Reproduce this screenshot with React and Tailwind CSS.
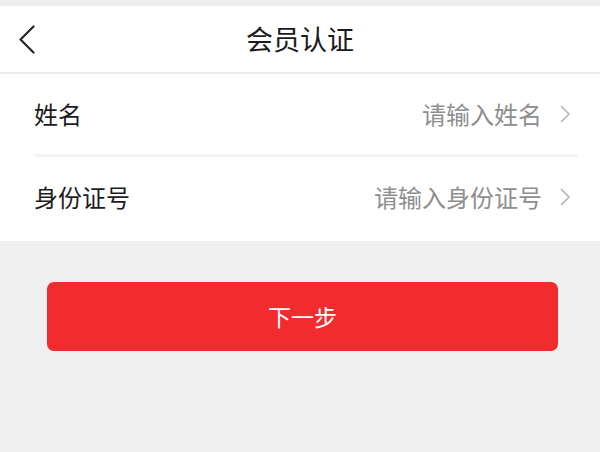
import React from "react";

const font = { fontFamily: '"Noto Sans CJK SC", "Noto Sans", sans-serif' };

const ChevronRight = () => (
  <svg width="11" height="18" viewBox="0 0 11 18" fill="none">
    <path d="M1.5 1.5L9 9L1.5 16.5" stroke="#b3b3b3" strokeWidth="1.6" strokeLinecap="round" strokeLinejoin="round" />
  </svg>
);

const Row = ({ label, placeholder, className = "" }) => (
  <div className={"flex items-center pl-[34px] pr-[29px] " + className}>
    <span className="text-[24px] text-[#1c1c1c] leading-none">{label}</span>
    <span className="ml-auto text-[24px] text-[#8e8e8e] leading-none">{placeholder}</span>
    <span className="ml-[18px] flex items-center">
      <ChevronRight />
    </span>
  </div>
);

export default function App() {
  return (
    <div className="w-[600px] h-[452px] bg-[#f0f0f0] flex flex-col overflow-hidden" style={font}>
      <div className="h-[6px] bg-[#eeeeee]" />

      {/* header */}
      <div className="h-[68px] bg-white border-b-2 border-[#ebebeb] grid grid-cols-[1fr_auto_1fr] items-center">
        <div className="pl-[18px] flex items-center">
          <svg width="18" height="29" viewBox="0 0 18 29" fill="none">
            <path d="M15.5 1.5L2.5 14.5L15.5 27.5" stroke="#262626" strokeWidth="2.2" strokeLinecap="round" strokeLinejoin="round" />
          </svg>
        </div>
        <div className="text-[27px] text-[#1a1a1a] leading-none pb-[2px]">会员认证</div>
        <div />
      </div>

      {/* form */}
      <div className="bg-white flex flex-col">
        <Row label="姓名" placeholder="请输入姓名" className="h-[80px]" />
        <div className="mx-[35px] mr-[22px] h-[3px] bg-[#f4f4f4]" />
        <Row label="身份证号" placeholder="请输入身份证号" className="h-[84px] pb-[4px]" />
      </div>

      <div className="px-[47px] mt-[41px]">
        <button className="w-[511px] h-[69px] rounded-[7px] bg-[#f22b2f] text-white text-[23px] flex items-center justify-center">
          下一步
        </button>
      </div>
    </div>
  );
}
